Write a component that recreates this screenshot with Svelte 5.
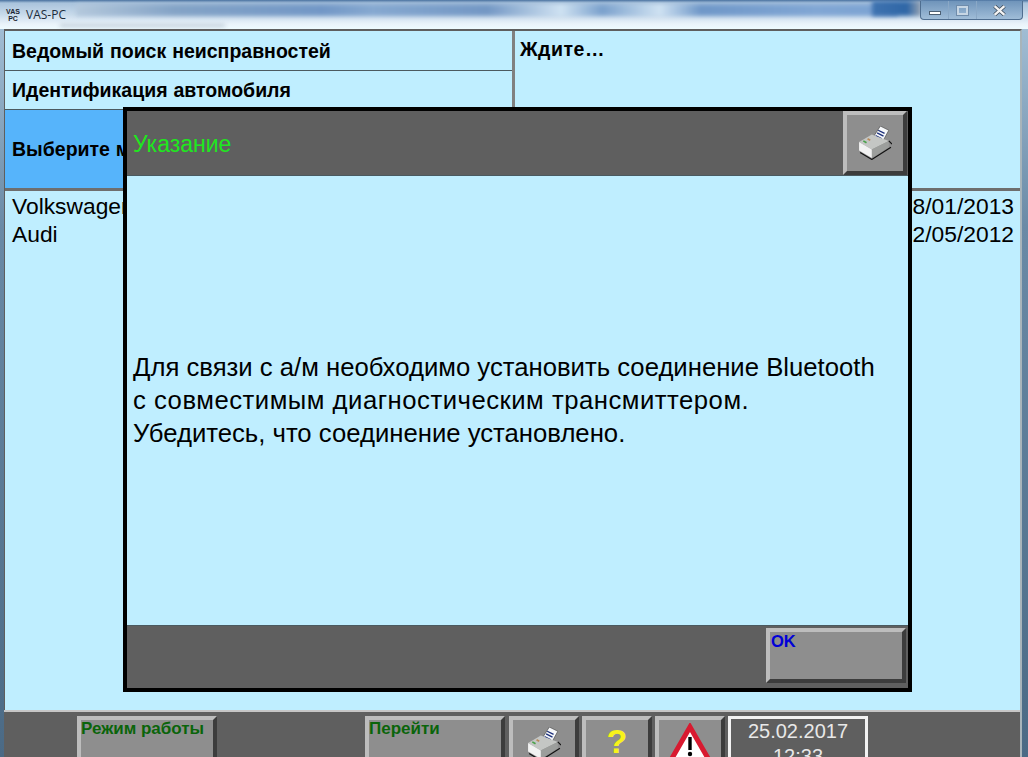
<script lang="ts">
	const dates = ['8/01/2013', '2/05/2012'];
	const makes = ['Volkswagen', 'Audi'];
</script>

{#snippet printer()}
	<svg class="printer" viewBox="0 0 32 32" width="34" height="34" aria-hidden="true">
		<path d="M14 11 L21 0 L29 4 L23 15 Z" fill="#f6f8fa" stroke="#555" stroke-width=".7" />
		<path d="M19 4 l6 3 M18 6.5 l6 3 M16.5 9 l6 3" stroke="#1c2f7a" stroke-width="1.3" />
		<path d="M1 15 L13 8 L29 14 L13 22 Z" fill="#c4c6c4" />
		<path d="M13 22 L29 14 L29 20 L13 30 Z" fill="#9c9e9c" />
		<path d="M1 15 L13 22 L13 30 L1 23 Z" fill="#f2f2f2" />
		<path d="M5 14 l3 1.8" stroke="#4aa24a" stroke-width="1.6" />
		<path d="M9 12 l2.5 1.5" stroke="#b98a5a" stroke-width="1.6" />
		<path d="M2 25 L13 31.5 L31 20 M29 14 L32 17" fill="none" stroke="#111" stroke-width="1.1" />
	</svg>
{/snippet}

<div class="window">
	<header class="titlebar">
		<div class="smear smear-a"></div>
		<div class="smear smear-b"></div>
		<div class="smear smear-c"></div>
		<div class="logo"><span>VAS</span><span>PC</span></div>
		<span class="app-name">VAS-PC</span>
		<div class="controls">
			<span class="ctl"><i class="min"></i></span>
			<span class="ctl"><i class="max"></i></span>
			<span class="ctl close">
				<svg viewBox="0 0 12 10" width="13" height="11" aria-hidden="true">
					<path d="M1.5 1 L10.5 9 M10.5 1 L1.5 9" stroke="#3d4a58" stroke-width="3.6" />
					<path d="M1.5 1 L10.5 9 M10.5 1 L1.5 9" stroke="#f4f4f4" stroke-width="2.2" />
				</svg>
			</span>
		</div>
	</header>

	<main class="content">
		<div class="panes">
			<section class="crumbs">
				<div class="crumb first-crumb">Ведомый поиск неисправностей</div>
				<div class="crumb">Идентификация автомобиля</div>
				<div class="crumb active"><span>Выберите м</span></div>
			</section>
			<section class="status">Ждите…</section>
		</div>

		<div class="list">
			{#each makes as make, i}
				<div class="list-row"><span>{make}</span><span>{dates[i]}</span></div>
			{/each}
		</div>

		<footer class="toolbar">
			<button class="tool wide label-green first">Режим работы</button>
			<button class="tool wide label-green second">Перейти</button>
			<button class="tool icon print-tool">{@render printer()}</button>
			<button class="tool icon help">?</button>
			<button class="tool icon">
				<svg class="warn" viewBox="0 0 52 46" width="52" height="46" aria-hidden="true">
					<path d="M26 4 L49 44 L3 44 Z" fill="#fff" stroke="#d81a30" stroke-width="5" stroke-linejoin="miter" />
					<path d="M26 14 L26 27" stroke="#000" stroke-width="3.4" />
					<circle cx="26" cy="31" r="2.2" fill="#000" />
				</svg>
			</button>
			<div class="clock"><span>25.02.2017</span><span>12:33</span></div>
		</footer>
	</main>

	<div class="dialog">
		<div class="dialog-head">
			<h2>Указание</h2>
			<button class="tool print-btn">{@render printer()}</button>
		</div>
		<div class="dialog-body">
			<p>Для связи с а/м необходимо установить соединение Bluetooth<br /><span class="wider">с совместимым диагностическим трансмиттером.</span><br />Убедитесь, что соединение установлено.</p>
		</div>
		<div class="dialog-foot">
			<button class="tool ok">OK</button>
		</div>
	</div>
</div>

<style>
	:global(body) {
		margin: 0;
		overflow: hidden;
	}

	.window {
		position: relative;
		display: flex;
		flex-direction: column;
		width: 1028px;
		height: 757px;
		overflow: hidden;
		box-sizing: border-box;
		padding: 0 6px 0 4px;
		background: linear-gradient(to bottom, #a9c4da, #6a8aa6 30%, #4b6a85);
		font-family: 'Liberation Sans', Arial, sans-serif;
		color: #000;
	}

	.titlebar {
		position: relative;
		flex: none;
		height: 29px;
		margin: 0 -6px 0 -4px;
		padding-left: 6px;
		display: flex;
		align-items: center;
		gap: 6px;
		overflow: hidden;
		background: linear-gradient(to bottom, #47709e 0, #a9c3dc 3px, #c6d9ea 14px, #eaf3fa 24px, #eefbff 29px);
	}

	.smear {
		position: absolute;
		filter: blur(2px);
	}

	.smear-a {
		left: 76px;
		right: 130px;
		top: 4px;
		height: 12px;
		background: linear-gradient(to right, #b4c8dc, #84a3c6 12%, #7297c6 30%, #86a8d0 36%, #7397c4 50%, #cfe2f2 59%, #7aa0cc 64%, #cfe2f2 71%, #6f97c8 76%, #81a6d4 90%, #7ba2d2);
	}

	.smear-b {
		left: 60px;
		width: 165px;
		top: 24px;
		height: 3px;
		background: #bccad6;
	}

	.smear-c {
		right: 106px;
		width: 50px;
		top: 1px;
		height: 15px;
		background: linear-gradient(to right, #3f73b0, #2f66a6 70%, #9fa8b4);
	}

	.logo {
		position: relative;
		display: flex;
		flex-direction: column;
		align-items: center;
		font-size: 7px;
		font-weight: 700;
		line-height: 7px;
		width: 14px;
		color: #1a2430;
	}

	.app-name {
		position: relative;
		font-size: 12px;
		color: #1c2c3c;
		font-family: 'Open Sans', sans-serif;
		margin-top: -1px;
	}

	.controls {
		position: absolute;
		top: 1px;
		right: 5px;
		display: flex;
		height: 18px;
		border: 1px solid #4f6e90;
		border-top: none;
		border-radius: 0 0 4px 4px;
		background: linear-gradient(to bottom, #6f94ba, #a0bdd8);
	}

	.ctl {
		display: flex;
		align-items: center;
		justify-content: center;
		width: 27px;
		border-right: 1px solid #8aa8c6;
	}

	.ctl.close {
		width: 45px;
		border-right: none;
	}

	.min {
		display: block;
		width: 10px;
		height: 2px;
		margin-top: 5px;
		background: #fff;
		border: 1px solid #4c5f72;
	}

	.max {
		display: block;
		width: 7px;
		height: 5px;
		border: 2px solid #c7d6e4;
		outline: 1px solid #6f8cab;
	}

	.content {
		flex: 1;
		min-height: 0;
		display: flex;
		flex-direction: column;
		background: #bfeeff;
		border-top: 2px solid #5e5e5e;
		border-left: 1px solid #5e5e5e;
		border-right: 2px solid #a8b4ba;
	}

	.panes {
		flex: none;
		display: grid;
		grid-template-columns: 507px 1fr;
		gap: 3px;
		background: #808080;
		height: 157px;
	}

	.crumbs {
		display: grid;
		grid-template-rows: 39px 38px 1fr;
		gap: 1px;
		background-color: #4b5a60;
	}

	.crumb {
		display: flex;
		align-items: center;
		padding-left: 7px;
		background: #bfeeff;
		font-size: 19.5px;
		font-weight: 700;
		word-spacing: 0.5px;
	}

	.first-crumb {
		padding-top: 1px;
	}

	.crumb.active {
		background: #56b4fb;
	}

	.status {
		background: #bfeeff;
		padding: 7px 5px;
		font-size: 19.5px;
		font-weight: 700;
		line-height: 22px;
		letter-spacing: 0.5px;
	}

	.list {
		flex: 1;
		min-height: 0;
		padding: 1px 6px 0 7px;
		border-top: 3px solid #6e6e6e;
		font-size: 22.8px;
		line-height: 28px;
	}

	.list-row {
		display: flex;
		justify-content: space-between;
	}

	.toolbar {
		flex: none;
		height: 47px;
		display: flex;
		gap: 3px;
		padding: 4px 0 0 73px;
		box-sizing: border-box;
		overflow: hidden;
		background: #5f5f5f;
		border-top: 2px solid #c6c6c6;
		margin-left: -1px;
	}

	.tool {
		display: block;
		box-sizing: border-box;
		margin: 0;
		padding: 0;
		background: #8e8e8e;
		border-style: solid;
		border-width: 4px;
		border-color: #bdbdbd #3c3c3c #3c3c3c #bdbdbd;
		font-family: inherit;
		font-weight: 700;
		text-align: left;
	}

	.wide {
		flex: none;
		width: 140px;
		height: 64px;
		padding: 0;
		font-size: 17px;
		line-height: 18px;
		display: flex;
		align-items: flex-start;
	}

	.label-green {
		color: #0a640a;
	}

	.first {
		margin-right: 145px;
	}

	.second {
		margin-right: 1px;
	}

	.icon {
		flex: none;
		width: 70px;
		height: 64px;
		display: flex;
		justify-content: center;
		padding-top: 4px;
	}

	.print-tool {
		padding-top: 7px;
	}

	.help {
		color: #f7f31a;
		font-size: 34px;
		line-height: 34px;
		padding-top: 4px;
	}

	.warn {
		flex: none;
		margin-top: -1px;
	}

	.clock {
		flex: none;
		box-sizing: border-box;
		width: 140px;
		height: 64px;
		border: 3px solid #f2f2f2;
		background: #5f5f5f;
		color: #e8e8e8;
		font-size: 20px;
		line-height: 25px;
		display: flex;
		flex-direction: column;
		align-items: center;
	}

	.dialog {
		position: absolute;
		left: 123px;
		top: 107px;
		width: 789px;
		height: 585px;
		box-sizing: border-box;
		display: flex;
		flex-direction: column;
		border: 4px solid #000;
		background: #bfeeff;
	}

	.dialog-head {
		flex: none;
		height: 65px;
		display: flex;
		justify-content: space-between;
		background: #5f5f5f;
		border-bottom: 1px solid #4a5a60;
		box-sizing: border-box;
	}

	.dialog-head h2 {
		margin: 0;
		padding: 20px 0 0 6px;
		font-size: 23px;
		line-height: 26px;
		font-weight: 400;
		color: #1ee81e;
	}

	.print-btn {
		width: 64px;
		height: 64px;
		margin-right: 1px;
		display: flex;
		align-items: center;
		justify-content: center;
	}

	.dialog-body {
		flex: 1;
		display: flex;
		align-items: center;
		padding: 0 6px;
	}

	.dialog-body p {
		margin: 0;
		font-size: 25.7px;
		line-height: 33px;
	}

	.wider {
		letter-spacing: 0.5px;
	}

	.dialog-foot {
		flex: none;
		height: 63px;
		box-sizing: border-box;
		display: flex;
		justify-content: flex-end;
		padding: 2px 2px 0 0;
		background: #5f5f5f;
		border-top: 1px solid #4a5a60;
	}

	.ok {
		width: 140px;
		height: 55px;
		padding: 0 0 0 1px;
		display: flex;
		align-items: flex-start;
		font-size: 16.5px;
		line-height: 18px;
		color: #0000d8;
	}
</style>
